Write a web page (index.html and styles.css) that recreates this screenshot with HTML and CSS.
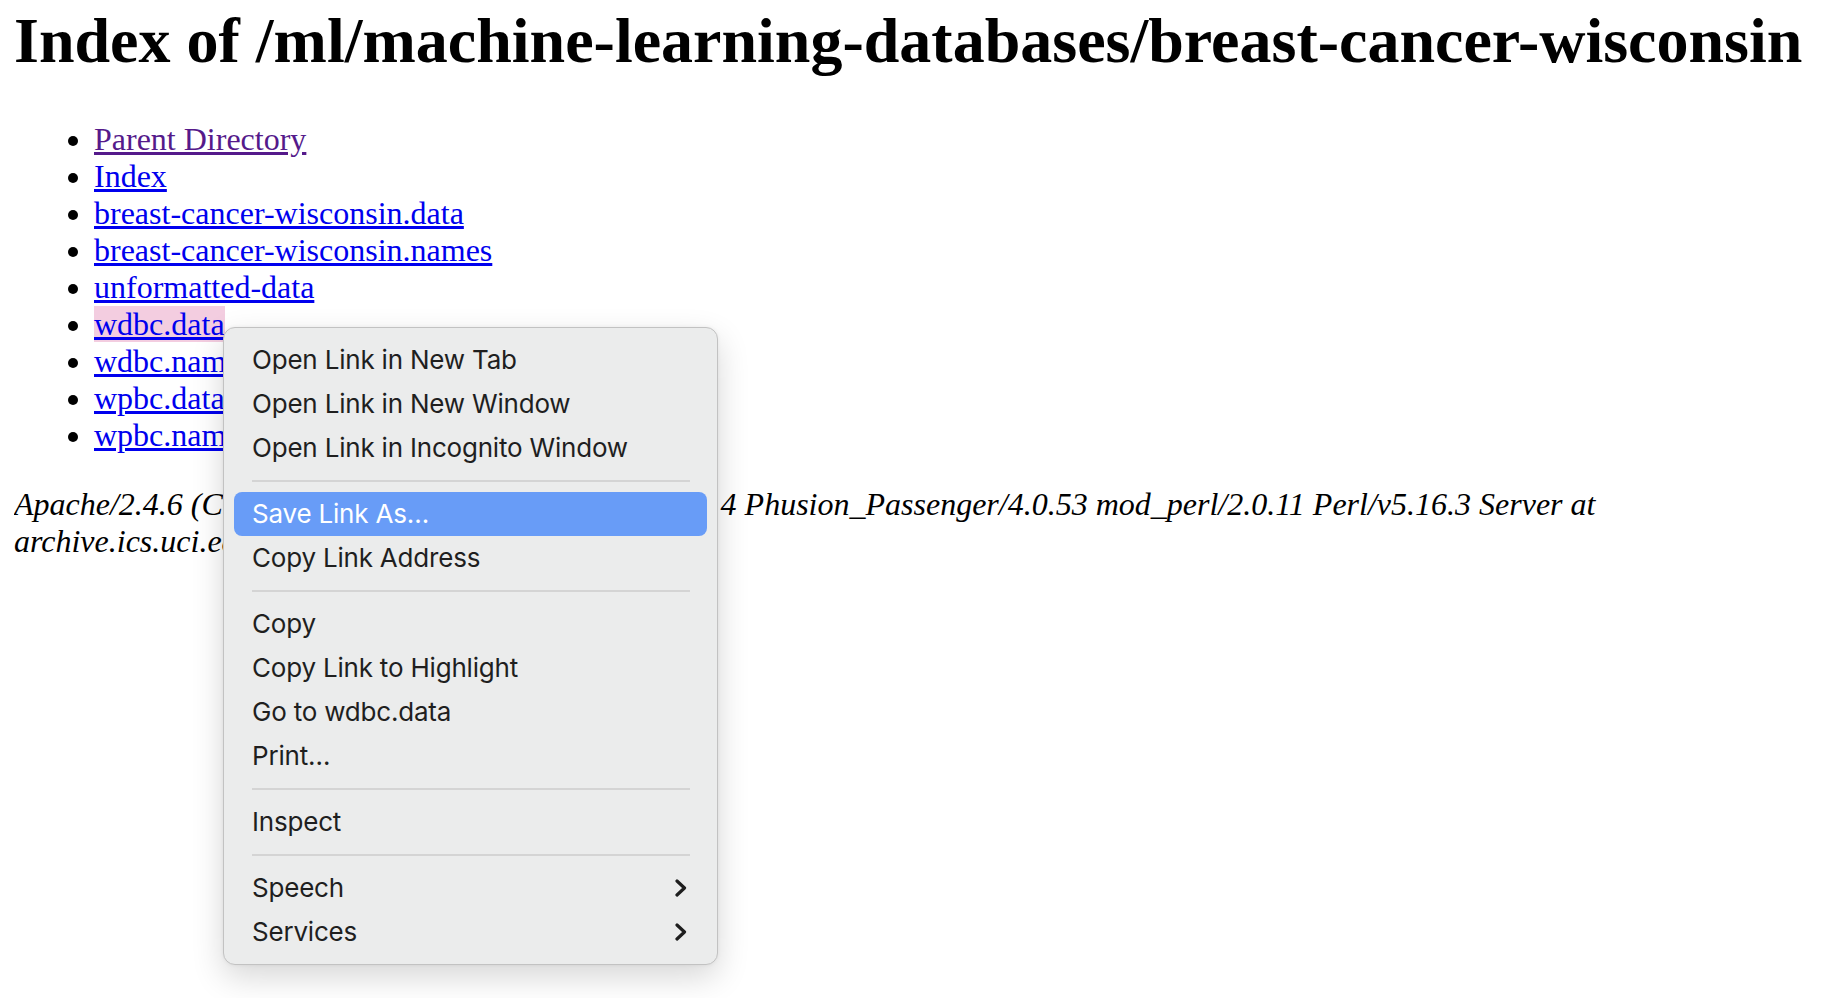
FILE: index.html
```html
<!DOCTYPE html>
<html lang="en">
<head>
    <meta charset="UTF-8">
    <title>Index of /ml/machine-learning-databases/breast-cancer-wisconsin</title>
    <link rel="stylesheet" href="styles.css">
</head>
<body>
<h1>Index of /ml/machine-learning-databases/breast-cancer-wisconsin</h1>
<ul>
    <li><a class="visited" href="#"> Parent Directory</a></li>
    <li><a href="#"> Index</a></li>
    <li><a href="#"> breast-cancer-wisconsin.data</a></li>
    <li><a href="#"> breast-cancer-wisconsin.names</a></li>
    <li><a href="#"> unformatted-data</a></li>
    <li><a class="picked" href="#"> wdbc.data</a></li>
    <li><a href="#"> wdbc.names</a></li>
    <li><a href="#"> wpbc.data</a></li>
    <li><a href="#"> wpbc.names</a></li>
</ul>
<address>Apache/2.4.6 (CentOS) OpenSSL/1.0.2k-fips SVN/1.7.14 Phusion_Passenger/4.0.53 mod_perl/2.0.11 Perl/v5.16.3 Server at archive.ics.uci.edu Port 443</address>

<!-- right-click menu opened on wdbc.data -->
<div class="context-menu">
    <div class="menu-item">Open Link in New Tab</div>
    <div class="menu-item">Open Link in New Window</div>
    <div class="menu-item">Open Link in Incognito Window</div>
    <div class="menu-sep"></div>
    <div class="menu-item active">Save Link As…</div>
    <div class="menu-item">Copy Link Address</div>
    <div class="menu-sep"></div>
    <div class="menu-item">Copy</div>
    <div class="menu-item">Copy Link to Highlight</div>
    <div class="menu-item">Go to wdbc.data</div>
    <div class="menu-item">Print…</div>
    <div class="menu-sep"></div>
    <div class="menu-item">Inspect</div>
    <div class="menu-sep"></div>
    <div class="menu-item">Speech
        <svg class="chevron" width="12" height="18" viewBox="0 0 12 18"><path d="M2 2 L9.5 9 L2 16" fill="none" stroke="#1e1e1e" stroke-width="3.2" stroke-linecap="round" stroke-linejoin="round"/></svg>
    </div>
    <div class="menu-item">Services
        <svg class="chevron" width="12" height="18" viewBox="0 0 12 18"><path d="M2 2 L9.5 9 L2 16" fill="none" stroke="#1e1e1e" stroke-width="3.2" stroke-linecap="round" stroke-linejoin="round"/></svg>
    </div>
</div>
</body>
</html>
```

FILE: styles.css
```css
body {
    font-family: "Liberation Serif", "Times New Roman", serif;
    font-size: 32px;
    background-color: #ffffff;
    color: #000000;
    margin: 0 16px 16px 14px;
}

h1 {
    font-size: 64px;
    font-weight: bold;
    margin: 4px 0 43px;
    white-space: nowrap;
}

ul {
    margin: 32px 0;
    padding-left: 80px;
}

a {
    color: #0000ee;
}

a.visited {
    color: #551a8b;
}

a.picked {
    background-color: #f3cde0;
}

address {
    font-style: italic;
}

.context-menu {
    position: absolute;
    left: 223px;
    top: 327px;
    width: 495px;
    box-sizing: border-box;
    padding: 10px 0;
    background-color: #ebecec;
    border: 1px solid #c2c2c2;
    border-radius: 12px;
    box-shadow: 0 12px 32px rgba(0, 0, 0, 0.16), 0 0 4px rgba(0, 0, 0, 0.06);
    font-family: Inter, "Noto Sans", sans-serif;
    font-size: 26px;
    letter-spacing: -0.2px;
    color: #1f1f1f;
}

.menu-item {
    display: flex;
    align-items: center;
    justify-content: space-between;
    height: 44px;
    line-height: 46px;
    margin: 0 10px;
    padding: 0 20px 0 18px;
    border-radius: 8px;
}

.menu-item.active {
    background-color: #689cf7;
    color: #ffffff;
}

.menu-sep {
    height: 2px;
    margin: 10px 27px 10px 28px;
    background-color: #d4d4d4;
}
```
